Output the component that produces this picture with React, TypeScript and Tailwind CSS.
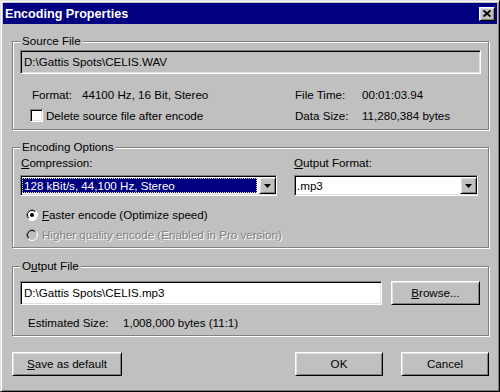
const raised =
  "border border-t-white border-l-white border-r-black border-b-black shadow-[inset_1px_1px_0_#dfdfdf,inset_-1px_-1px_0_#808080]";
const sunken =
  "border border-t-[#808080] border-l-[#808080] border-r-white border-b-white shadow-[inset_1px_1px_0_#000,inset_-1px_-1px_0_#dfdfdf]";
const disabled = "text-[#808080] [text-shadow:1px_1px_0_#fff]";

function Group({
  title,
  className,
  children,
}: {
  title: React.ReactNode;
  className: string;
  children: React.ReactNode;
}) {
  return (
    <div
      className={`relative ml-[9px] w-[477px] border border-[#808080] shadow-[inset_1px_1px_0_#fff,1px_1px_0_#fff] ${className}`}
    >
      <span className="absolute left-[7px] top-[-8px] bg-[#c0c0c0] px-[2px] leading-[14px]">
        {title}
      </span>
      {children}
    </div>
  );
}

function Arrow() {
  return (
    <div className={`flex h-[17px] w-[17px] shrink-0 items-center justify-center bg-[#c0c0c0] ${raised}`}>
      <svg width="7" height="4" viewBox="0 0 7 4">
        <polygon points="0,0 7,0 3.5,4" fill="#000" />
      </svg>
    </div>
  );
}

function Radio({ checked, off }: { checked?: boolean; off?: boolean }) {
  return (
    <svg width="12" height="12" viewBox="0 0 12 12" className="shrink-0">
      <circle cx="6" cy="6" r="5.5" fill={off ? "#c0c0c0" : "#fff"} stroke="#fff" />
      <path d="M2.1 9.9 A5.5 5.5 0 0 1 9.9 2.1" fill="none" stroke="#808080" />
      <path d="M2.8 9.2 A4.5 4.5 0 0 1 9.2 2.8" fill="none" stroke="#000" />
      {checked && <circle cx="6" cy="6" r="2" fill="#000" />}
    </svg>
  );
}

function Button({ w, children }: { w: string; children: React.ReactNode }) {
  return (
    <div className={`flex h-[24px] items-center justify-center bg-[#c0c0c0] ${w} ${raised}`}>
      {children}
    </div>
  );
}

export default function App() {
  return (
    <div className="h-[392px] w-[500px] overflow-hidden border border-t-[#dfdfdf] border-l-[#dfdfdf] border-r-black border-b-black bg-[#c0c0c0] p-[2px] font-['Liberation_Sans',Arial,sans-serif] text-[11.6px] leading-[14px] text-black shadow-[inset_1px_1px_0_#fff,inset_-1px_-1px_0_#808080]">
      <div className="flex h-[21px] items-center justify-between bg-[#000080] pl-[2px] pr-[2px]">
        <span className="text-[12.6px] font-bold text-white">Encoding Properties</span>
        <div className={`flex h-[14px] w-[16px] items-center justify-center bg-[#c0c0c0] ${raised}`}>
          <svg width="8" height="7" viewBox="0 0 8 7">
            <path d="M0.5 0.5 L7.5 6.5 M7.5 0.5 L0.5 6.5" stroke="#000" strokeWidth="1.8" />
          </svg>
        </div>
      </div>

      <Group title="Source File" className="mt-[17px] pb-[3px] pt-[8px]">
        <div className={`mx-[7px] flex h-[24px] items-center bg-[#c0c0c0] pl-[3px] ${sunken}`}>
          {"D:\\Gattis Spots\\CELIS.WAV"}
        </div>
        <div className="mt-[10px] grid grid-cols-[265px_1fr] pl-[17px]">
          <div className="flex h-[21px] items-center pl-[2px]">
            <span className="w-[50px]">Format:</span>
            <span>44100 Hz, 16 Bit, Stereo</span>
          </div>
          <div className="flex h-[21px] items-center">
            <span className="w-[67px]">File Time:</span>
            <span>00:01:03.94</span>
          </div>
          <div className="flex h-[21px] items-center gap-[3px]">
            <div className={`h-[13px] w-[13px] bg-white ${sunken}`} />
            <span>Delete source file after encode</span>
          </div>
          <div className="flex h-[21px] items-center">
            <span className="w-[67px]">Data Size:</span>
            <span>11,280,384 bytes</span>
          </div>
        </div>
      </Group>

      <Group title="Encoding Options" className="mt-[17px] pb-[2px] pt-[8px]">
        <div className="mx-[7px] flex gap-[17px]">
          <div className="w-[257px]">
            <div className="h-[14px] pl-[1px]">
              <u>C</u>ompression:
            </div>
            <div className={`mt-[5px] flex h-[21px] items-center bg-white ${sunken}`}>
              <div className="mx-[1px] flex h-[15px] flex-1 items-center border border-dotted border-[#e0e0a0] bg-[#000080] pl-[1px] text-white">
                128 kBit/s, 44,100 Hz, Stereo
              </div>
              <div className="ml-[1px]">
                <Arrow />
              </div>
            </div>
          </div>
          <div className="w-[184px]">
            <div className="h-[14px]">
              <u>O</u>utput Format:
            </div>
            <div className={`mt-[5px] flex h-[21px] items-center justify-between bg-white pl-[2px] ${sunken}`}>
              <span>.mp3</span>
              <Arrow />
            </div>
          </div>
        </div>
        <div className="ml-[13px] mt-[9px]">
          <div className="flex h-[20px] items-center gap-[4px]">
            <Radio checked />
            <span>
              <u>F</u>aster encode (Optimize speed)
            </span>
          </div>
          <div className="flex h-[20px] items-center gap-[4px]">
            <Radio off />
            <span className={disabled}>Higher quality encode (Enabled in Pro version)</span>
          </div>
        </div>
      </Group>

      <Group
        title={
          <>
            O<u>u</u>tput File
          </>
        }
        className="mt-[18px] pb-[5px] pt-[14px]"
      >
        <div className="mx-[7px] flex gap-[9px]">
          <div className={`flex h-[24px] w-[362px] items-center bg-white pl-[3px] ${sunken}`}>
            {"D:\\Gattis Spots\\CELIS.mp3"}
          </div>
          <Button w="w-[89px]">
            <span>
              <u>B</u>rowse...
            </span>
          </Button>
        </div>
        <div className="ml-[15px] mt-[11px] flex h-[14px] items-center">
          <span className="w-[95px]">Estimated Size:</span>
          <span>1,008,000 bytes (11:1)</span>
        </div>
      </Group>

      <div className="ml-[9px] mt-[16px] flex w-[477px]">
        <Button w="w-[110px]">
          <span>
            <u>S</u>ave as default
          </span>
        </Button>
        <div className="ml-auto flex gap-[18px]">
          <Button w="w-[88px]">OK</Button>
          <Button w="w-[88px]">Cancel</Button>
        </div>
      </div>
    </div>
  );
}
